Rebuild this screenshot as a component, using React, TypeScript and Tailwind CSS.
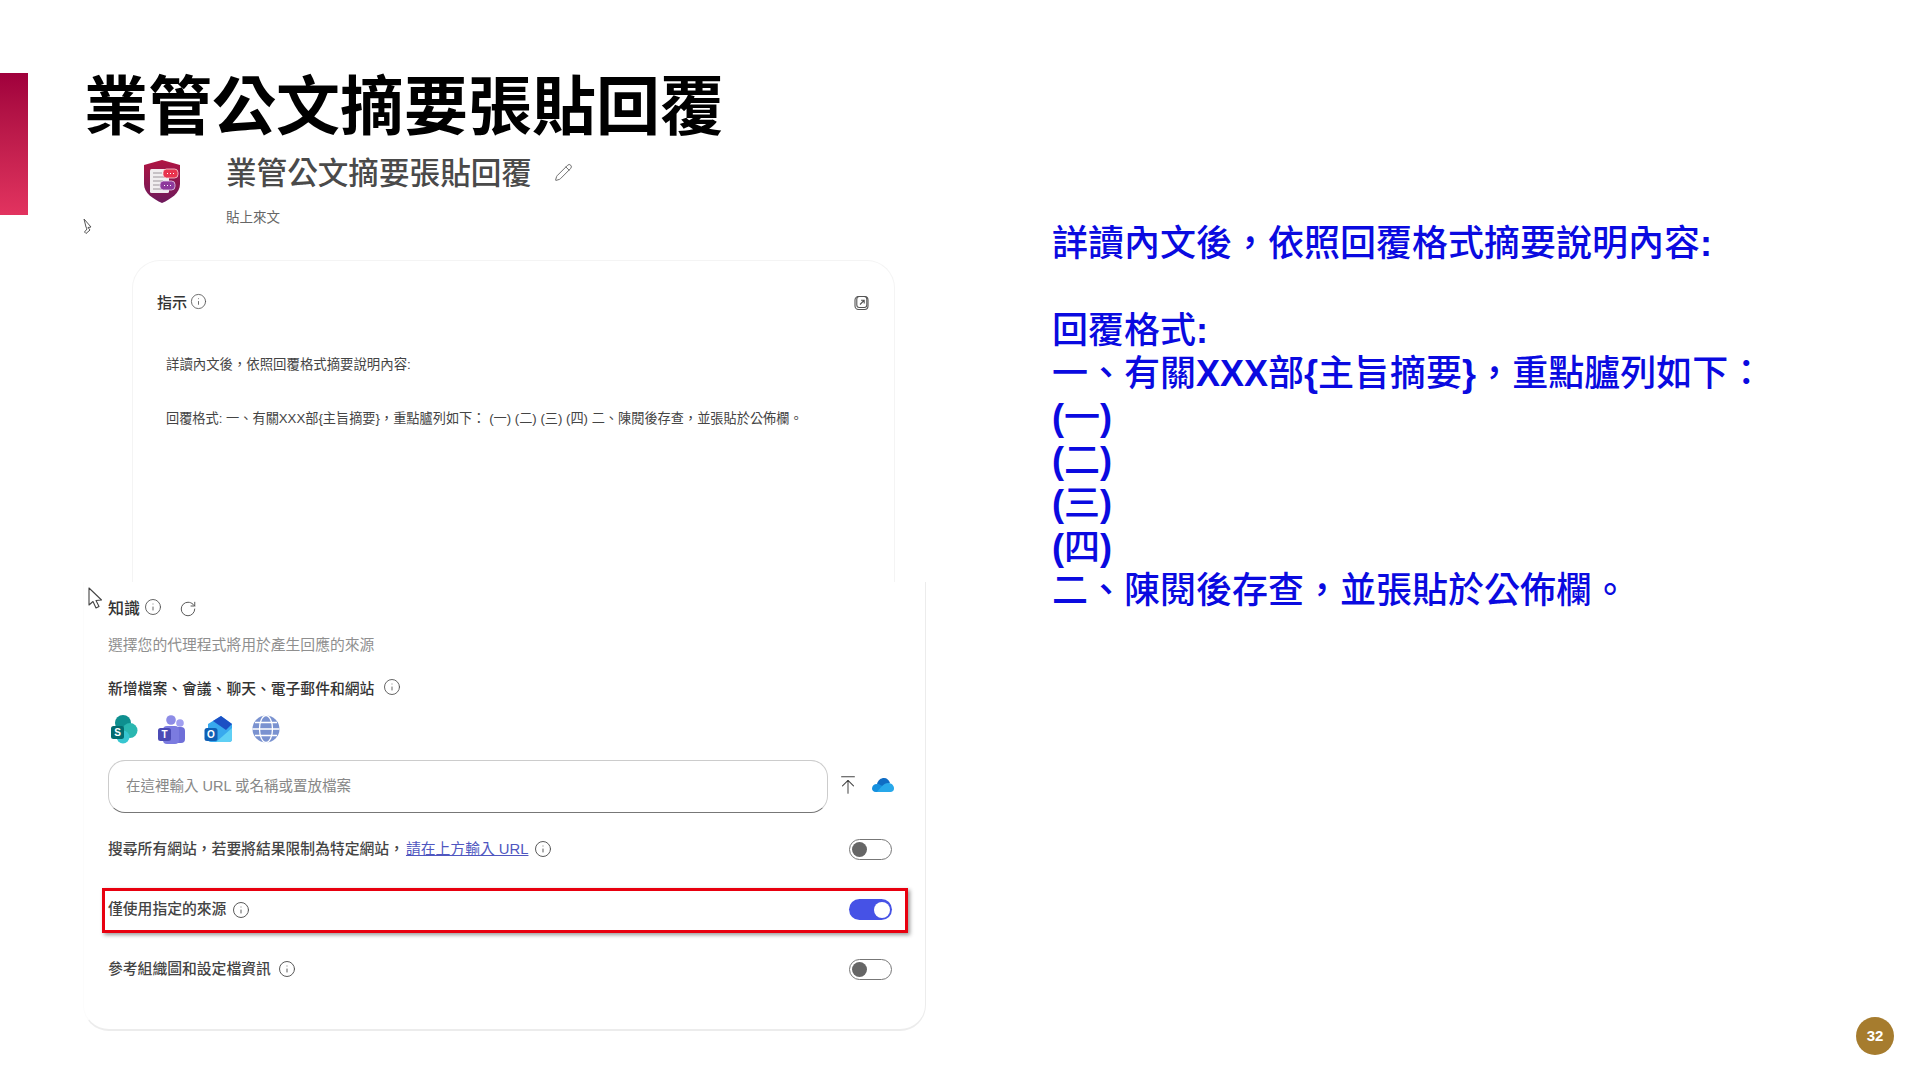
import { ArrowUpToLine, Info, Pencil, RotateCw } from "lucide-react";

const cjk = "font-['Liberation_Sans','Noto_Sans_CJK_TC',sans-serif]";

function InfoIcon({ size = 18 }: { size?: number }) {
    return <Info size={size} strokeWidth={1.3} className="shrink-0 text-[#555]" />;
}

function Toggle({ on = false }: { on?: boolean }) {
    return on ? (
        <div className="flex h-[21px] w-[43px] shrink-0 items-center justify-end rounded-full bg-[#4652e6] pr-[2px]">
            <div className="h-[16px] w-[16px] rounded-full bg-white" />
        </div>
    ) : (
        <div className="flex h-[21px] w-[43px] shrink-0 items-center rounded-full border border-[#777] pl-[2px]">
            <div className="h-[15px] w-[15px] rounded-full bg-[#666]" />
        </div>
    );
}

function ShieldLogo() {
    return (
        <svg width="36" height="43" viewBox="0 0 36 43" className="shrink-0">
            <defs>
                <linearGradient id="shield" x1="0" y1="0" x2="0" y2="1">
                    <stop offset="0" stopColor="#b01442" />
                    <stop offset="1" stopColor="#6d1a5c" />
                </linearGradient>
            </defs>
            <path d="M18 0 L36 5 V24 C36 33 27 39 18 43 C9 39 0 33 0 24 V5 Z" fill="url(#shield)" />
            <rect x="6" y="9" width="19" height="24" rx="1.5" fill="#f1eef0" />
            <path d="M9 13h9M9 17h12M9 21h10M9 25h12M9 29h8" stroke="#b9b4b8" strokeWidth="1.6" />
            <rect x="19" y="9" width="15" height="9" rx="3.5" fill="#e8344e" stroke="#f6d7dc" strokeWidth="0.8" />
            <path d="M23 13.5h1M26 13.5h1M29 13.5h1" stroke="white" strokeWidth="1.2" />
            <rect x="16" y="21" width="15" height="9" rx="3.5" fill="#8e3a9c" stroke="#e6d3ea" strokeWidth="0.8" />
            <path d="M20 25.5h1M23 25.5h1M26 25.5h1" stroke="white" strokeWidth="1.2" />
        </svg>
    );
}

function SharePointIcon() {
    return (
        <svg width="28" height="29" viewBox="0 0 28 29" className="shrink-0">
            <circle cx="13" cy="8" r="8" fill="#0e8f8f" />
            <circle cx="20" cy="15.5" r="7.5" fill="#2ab7b0" />
            <circle cx="13" cy="22" r="6.5" fill="#37c6d0" />
            <rect x="1" y="11" width="13" height="13" rx="2.5" fill="#036c70" />
            <text x="7.5" y="21" textAnchor="middle" fontSize="10" fontWeight="700" fill="white" fontFamily="Liberation Sans">S</text>
        </svg>
    );
}

function TeamsIcon() {
    return (
        <svg width="28" height="29" viewBox="0 0 28 29" className="shrink-0">
            <circle cx="14" cy="5" r="4.8" fill="#8d8ce6" />
            <circle cx="23" cy="8" r="3.8" fill="#a09ff0" />
            <rect x="17" y="12" width="11" height="16" rx="4" fill="#6f6fd8" />
            <rect x="6" y="11" width="16" height="18" rx="4" fill="#7b7be0" />
            <rect x="1" y="13" width="13" height="13" rx="2.5" fill="#4b4bb5" />
            <text x="7.5" y="23" textAnchor="middle" fontSize="10" fontWeight="700" fill="white" fontFamily="Liberation Sans">T</text>
        </svg>
    );
}

function OutlookIcon() {
    return (
        <svg width="29" height="28" viewBox="0 0 29 28" className="shrink-0">
            <path d="M4 9 L17 1 L28 9 V24 a3 3 0 0 1 -3 3 H7 a3 3 0 0 1 -3 -3 Z" fill="#38a9ee" />
            <path d="M9 6 L17 1 L28 9 L22 15 Z" fill="#1c4fc4" />
            <path d="M12 27 L28 13 V24 a3 3 0 0 1 -3 3 Z" fill="#5fd0f5" />
            <rect x="0.5" y="13" width="13" height="13" rx="2.5" fill="#0f5fb5" />
            <text x="7" y="23" textAnchor="middle" fontSize="10" fontWeight="700" fill="white" fontFamily="Liberation Sans">O</text>
        </svg>
    );
}

function GlobeIcon() {
    return (
        <svg width="28" height="28" viewBox="0 0 28 28" className="shrink-0">
            <circle cx="14" cy="14" r="13.5" fill="#7a92d0" />
            <path d="M0.5 14h27M3 7.5h22M3 20.5h22" stroke="white" strokeWidth="1.3" />
            <ellipse cx="14" cy="14" rx="6.5" ry="13.5" fill="none" stroke="white" strokeWidth="1.3" />
        </svg>
    );
}

function OneDriveIcon() {
    return (
        <svg width="22" height="14" viewBox="0 0 22 14" className="shrink-0">
            <path d="M5 6 C6 2 9 0 12 0 C15 0 17 2 18 5 L12 10 Z" fill="#0f6cc4" />
            <path d="M4 14 C1 14 0 12 0 10.5 C0 8 2 6 5 6 C8 6 10 8 12 9 L14 14 Z" fill="#1490df" />
            <path d="M5 14 C8 10 12 5 16 5 C20 5 22 8 22 10.5 C22 12.5 20.5 14 18.5 14 Z" fill="#28a8ea" />
        </svg>
    );
}

function SmallCursor() {
    return (
        <svg width="10" height="17" viewBox="0 0 10 17" className="absolute left-[83px] top-[218px]">
            <path d="M1 1 L8 9 L5 9.5 L7 12 L3 15.5 L1.5 14 L4 11 L3 9 Z" fill="white" stroke="#555" strokeWidth="1" />
        </svg>
    );
}

function ArrowCursor() {
    return (
        <svg width="15" height="23" viewBox="0 0 15 23" className="absolute left-[88px] top-[587px]">
            <path d="M1 1 V18 L5 14.5 L8 21 L11 19.5 L8 13.5 L13.5 13 Z" fill="white" stroke="#444" strokeWidth="1.1" strokeLinejoin="round" />
        </svg>
    );
}

export default function App() {
    return (
        <div className={`relative flex h-[1080px] w-[1920px] overflow-hidden bg-white ${cjk}`}>
            {/* Accent bar */}
            <div className="mt-[73px] h-[142px] w-[28px] shrink-0 bg-gradient-to-b from-[#a0003c] to-[#e2335f]" />

            {/* Left column */}
            <div className="ml-[55px] flex w-[843px] shrink-0 flex-col">
                <h1 className="mt-[74px] h-[66px] pl-[1px] text-[64px] font-bold leading-[66px] text-black whitespace-nowrap">業管公文摘要張貼回覆</h1>

                <div className="mt-[18px] flex h-[102px] pl-[61px]">
                    <div className="pt-[2px]">
                        <ShieldLogo />
                    </div>
                    <div className="ml-[46px] flex flex-col">
                        <div className="flex h-[30px] items-center">
                            <span className="text-[30.6px] font-medium leading-[30px] text-[#4a4a4a] whitespace-nowrap">業管公文摘要張貼回覆</span>
                            <Pencil size={19} strokeWidth={1.2} className="ml-[22px] -mt-[1px] text-[#666]" />
                        </div>
                        <div className="mt-[20px] text-[13.5px] leading-[20px] text-[#666]">貼上來文</div>
                    </div>
                </div>

                {/* Instructions card */}
                <div className="ml-[49px] h-[322px] w-[763px] rounded-t-[28px] border-x border-t border-[#f4f4f4] pl-[24px] pr-[22px] pt-[32px]">
                    <div className="flex h-[20px] items-center justify-between">
                        <div className="flex items-center gap-[3px]">
                            <span className="text-[15px] font-medium leading-[20px] text-[#333]">指示</span>
                            <Info size={17} strokeWidth={1.2} className="-mt-[3px] text-[#555]" />
                        </div>
                        <svg width="15" height="16" viewBox="0 0 15 16" fill="none" stroke="#555" strokeWidth="1.1" className="mr-[3px]">
                            <rect x="1" y="1.5" width="13" height="13" rx="3.5" />
                            <rect x="2.8" y="1.5" width="10" height="11" rx="2.5" />
                            <path d="M6 9.5 L10 5.5 M7 5.2 H10.2 V8.4" />
                        </svg>
                    </div>
                    <div className="ml-[9px] mt-[42px] h-[20px] text-[13.4px] leading-[20px] text-[#444] whitespace-nowrap">詳讀內文後，依照回覆格式摘要說明內容:</div>
                    <div className="ml-[9px] mt-[34px] h-[20px] text-[13.2px] leading-[20px] text-[#444] whitespace-nowrap">回覆格式: 一、有關XXX部{"{"}主旨摘要{"}"}，重點臚列如下： (一) (二) (三) (四) 二、陳閱後存查，並張貼於公佈欄。</div>
                </div>

                {/* Knowledge card */}
                <div className="h-[449px] w-[843px] rounded-b-[26px] border-x border-b-2 border-l-[#fcfcfc] border-r-[#ececec] border-b-[#ececec] pl-[24px] pr-[33px] pt-[17px]">
                    <div className="flex h-[20px] items-center">
                        <span className="text-[16px] font-medium leading-[20px] text-[#333]">知識</span>
                        <Info size={18} strokeWidth={1.2} className="ml-[4px] -mt-[4px] text-[#555]" />
                        <RotateCw size={18} strokeWidth={1.3} className="ml-[17px] text-[#555]" />
                    </div>
                    <div className="mt-[16px] h-[20px] text-[14.8px] leading-[20px] text-[#8f8f8f] whitespace-nowrap">選擇您的代理程式將用於產生回應的來源</div>
                    <div className="mt-[24px] flex h-[20px] items-center">
                        <span className="text-[14.8px] font-medium leading-[20px] text-[#333] whitespace-nowrap">新增檔案、會議、聊天、電子郵件和網站</span>
                        <Info size={18} strokeWidth={1.2} className="ml-[9px] -mt-[4px] text-[#555]" />
                    </div>
                    <div className="mt-[15px] flex h-[30px] items-center gap-[19px] pl-[2px]">
                        <SharePointIcon />
                        <TeamsIcon />
                        <OutlookIcon />
                        <GlobeIcon />
                    </div>
                    <div className="mt-[16px] flex h-[53px] items-center">
                        <div className="flex h-[53px] w-[720px] shrink-0 items-center rounded-[17px] border border-[#ccc] border-b-[#777] pl-[17px] text-[14.5px] text-[#888] whitespace-nowrap">在這裡輸入 URL 或名稱或置放檔案</div>
                        <ArrowUpToLine size={22} strokeWidth={1.1} className="ml-[9px] -mt-[3px] shrink-0 text-[#444]" />
                        <div className="ml-[13px] -mt-[3px] shrink-0">
                            <OneDriveIcon />
                        </div>
                    </div>
                    <div className="mt-[24px] flex h-[24px] items-center justify-between text-[14.8px] font-medium leading-[24px] text-[#444]">
                        <div className="flex items-center whitespace-nowrap">
                            <span>搜尋所有網站，若要將結果限制為特定網站，</span>
                            <span className="ml-[2px] font-normal text-[#4f56c0] underline">請在上方輸入 URL</span>
                            <span className="ml-[6px]"><InfoIcon /></span>
                        </div>
                        <Toggle />
                    </div>
                    <div className="-ml-[6px] mt-[27px] flex h-[45px] w-[806px] items-center justify-between border-[3px] border-[#e8000f] pl-[3px] pr-[13px] pb-[2px] text-[14.8px] font-medium text-[#444] shadow-[2px_2px_4px_rgba(0,0,0,0.4)]">
                        <div className="flex items-center gap-[6px] whitespace-nowrap">
                            <span>僅使用指定的來源</span>
                            <InfoIcon />
                        </div>
                        <Toggle on />
                    </div>
                    <div className="mt-[24px] flex h-[24px] items-center justify-between text-[14.8px] font-medium leading-[24px] text-[#444]">
                        <div className="flex items-center gap-[7px] whitespace-nowrap">
                            <span>參考組織圖和設定檔資訊</span>
                            <InfoIcon />
                        </div>
                        <Toggle />
                    </div>
                </div>
            </div>

            {/* Right column */}
            <div className="ml-[126px] flex flex-1 flex-col pt-[222px]">
                <div className="text-[36px] font-medium leading-[43.4px] text-[#0a0ae0] whitespace-nowrap">
                    <div>詳讀內文後，依照回覆格式摘要說明內容<b>:</b></div>
                    <div>{"\u00a0"}</div>
                    <div>回覆格式<b>:</b></div>
                    <div>一、有關<b>XXX</b>部<b>{"{"}</b>主旨摘要<b>{"}"}</b>，重點臚列如下：</div>
                    <div><b>(</b>一<b>)</b></div>
                    <div><b>(</b>二<b>)</b></div>
                    <div><b>(</b>三<b>)</b></div>
                    <div><b>(</b>四<b>)</b></div>
                    <div>二、陳閱後存查，並張貼於公佈欄。</div>
                </div>
                <div className="mb-[25px] mr-[26px] mt-auto flex h-[38px] w-[38px] items-center justify-center self-end rounded-full bg-[#a67c2e] text-[15px] font-bold text-white">32</div>
            </div>

            <SmallCursor />
            <ArrowCursor />
        </div>
    );
}
